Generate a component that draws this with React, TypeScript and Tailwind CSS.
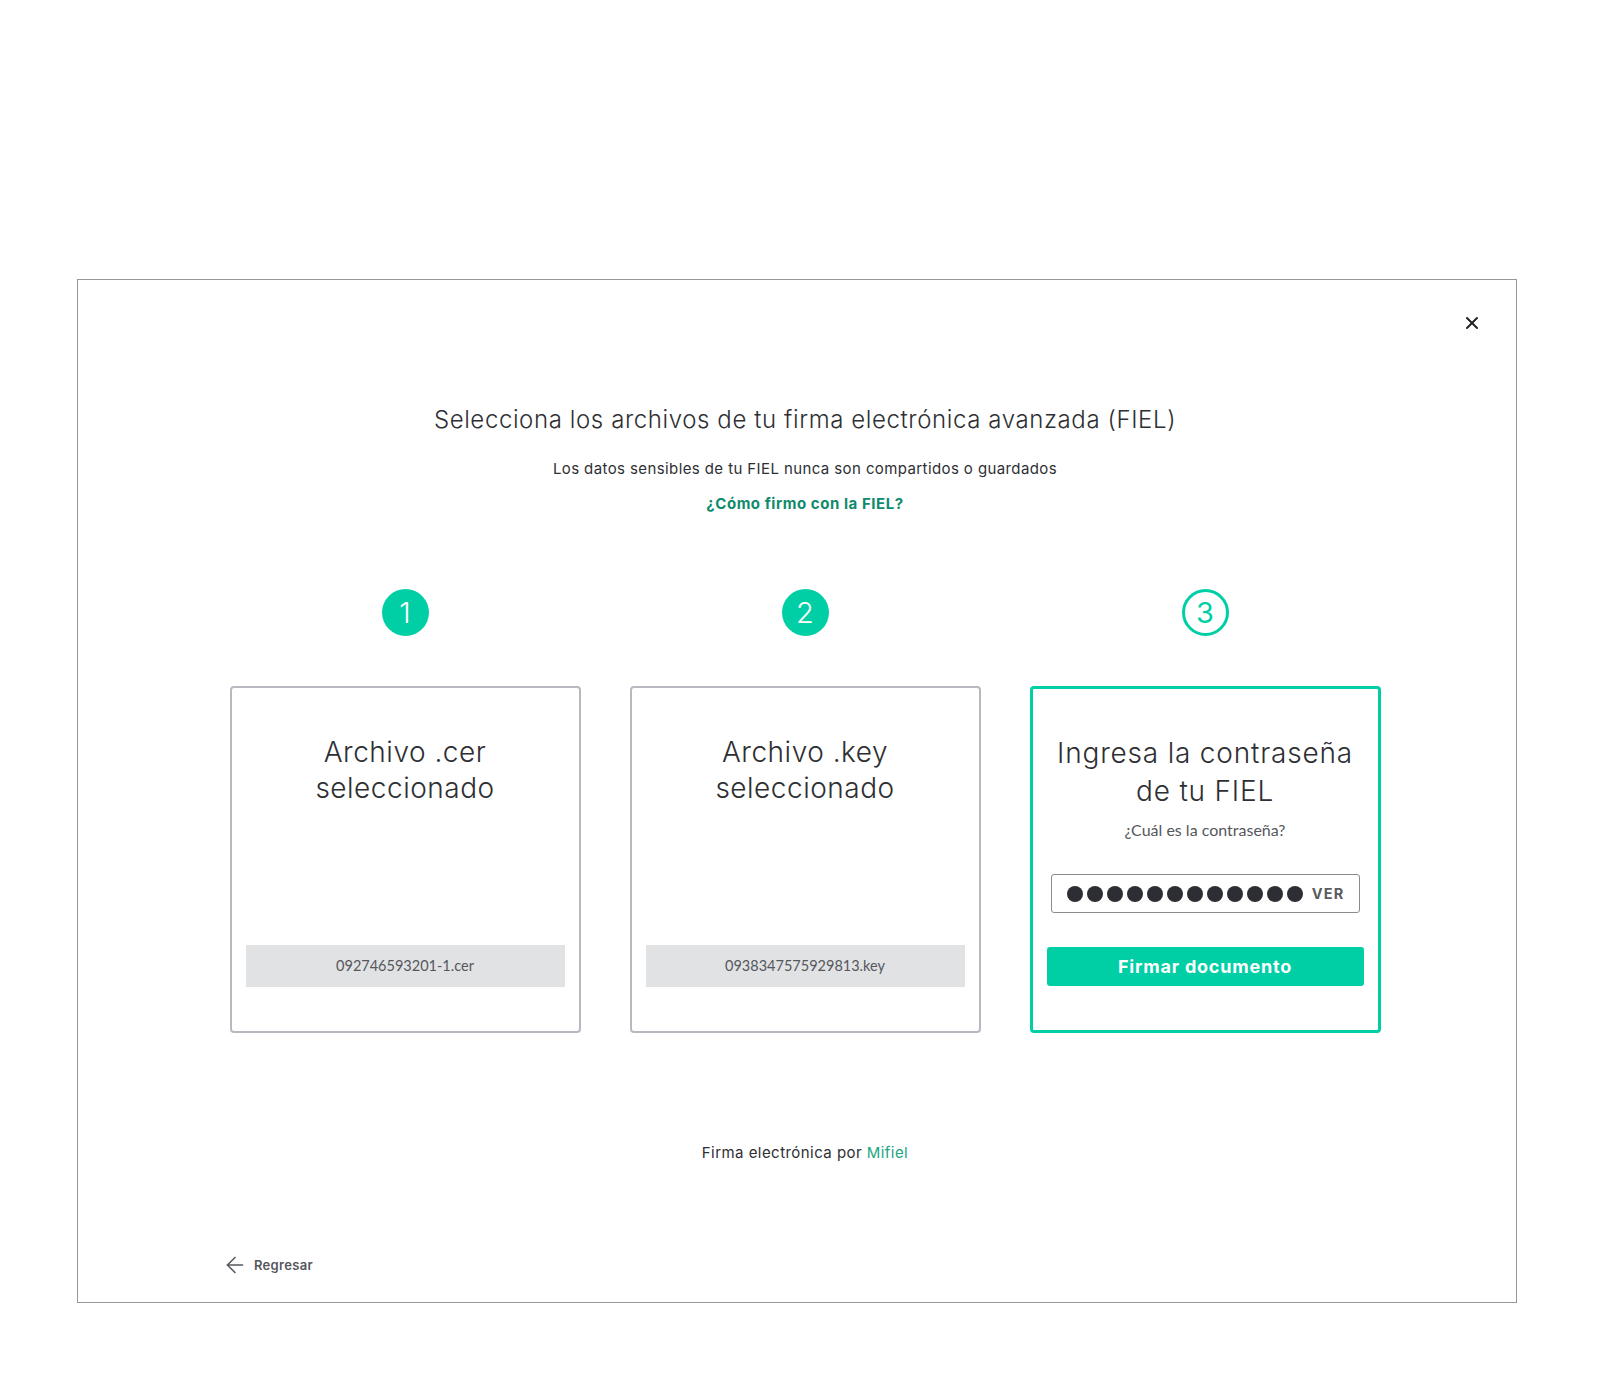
import { X, ArrowLeft } from 'lucide-react';

const FILES = [
  { step: '1', title: ['Archivo .cer', 'seleccionado'], file: '092746593201-1.cer' },
  { step: '2', title: ['Archivo .key', 'seleccionado'], file: '0938347575929813.key' },
];

function StepCircle({ n, outlined }: { n: string; outlined?: boolean }) {
  return (
    <div
      className={
        outlined
          ? 'flex h-[47px] w-[47px] items-center justify-center rounded-full border-[3px] border-[#00cfa6] text-[29px] font-normal text-[#00cfa6]'
          : 'flex h-[47px] w-[47px] items-center justify-center rounded-full bg-[#00cfa6] text-[29px] font-light text-white'
      }
    >
      {n}
    </div>
  );
}

function FileCard({ title, file }: { title: string[]; file: string }) {
  return (
    <div className="flex h-[347px] flex-col rounded-[4px] border-2 border-[#b8b9c0] px-[14px] pt-[46px] pb-[44px]">
      <div className="text-center text-[28px] leading-[36px] font-light tracking-[0.5px] text-[#2e2f33]">
        {title[0]}
        <br />
        {title[1]}
      </div>
      <div className="mt-auto flex h-[42px] items-center justify-center bg-[#e1e2e4] font-['Lato',sans-serif] text-[14.5px] text-[#55575c]">
        {file}
      </div>
    </div>
  );
}

function PasswordCard() {
  return (
    <div className="flex h-[347px] flex-col rounded-[4px] border-[3px] border-[#00cfa6] px-[14px] pt-[45px]">
      <div className="text-center text-[28px] leading-[38px] font-light tracking-[0.8px] text-[#2e2f33]">
        Ingresa la contraseña
        <br />
        de tu FIEL
      </div>
      <div className="mt-[10px] text-center font-['Lato',sans-serif] text-[16px] leading-[20px] text-[#55575c]">
        ¿Cuál es la contraseña?
      </div>
      <div className="mx-[4px] mt-[34px] flex h-[39px] items-center justify-between rounded-[3px] border border-[#8a8b8f] pr-[14px] pl-[15px]">
        <div className="flex gap-[4px]">
          {Array.from({ length: 12 }).map((_, i) => (
            <span key={i} className="h-[16px] w-[16px] rounded-full bg-[#2d2e33]" />
          ))}
        </div>
        <span className="text-[14.5px] font-bold tracking-[1.2px] text-[#5b5c61]">VER</span>
      </div>
      <button className="mt-[34px] flex h-[39px] items-center justify-center rounded-[3px] bg-[#00cfa6] text-[18px] font-bold tracking-[0.8px] text-white">
        Firmar documento
      </button>
    </div>
  );
}

export default function App() {
  return (
    <div className="h-[1379px] w-[1609px] bg-white pt-[279px] pl-[77px] font-['Inter',sans-serif]">
      <div className="relative h-[1024px] w-[1440px] border border-[#979797]">
        {/* Close */}
        <button className="absolute top-[33px] right-[34px] text-[#222]">
          <X className="h-[20px] w-[20px]" strokeWidth={2.4} />
        </button>

        <div className="flex flex-col items-center pt-[124px] pl-[16px]">
          <h1 className="text-[24px] leading-[32px] font-light tracking-[0.6px] text-[#2e2f33]">
            Selecciona los archivos de tu firma electrónica avanzada (FIEL)
          </h1>
          <p className="mt-[23px] text-[15px] leading-[20px] tracking-[0.4px] text-[#2e2f33]">
            Los datos sensibles de tu FIEL nunca son compartidos o guardados
          </p>
          <a className="mt-[15px] text-[15px] leading-[20px] font-bold tracking-[0.55px] text-[#0f8a6c]">
            ¿Cómo firmo con la FIEL?
          </a>

          <div className="mt-[75px] grid grid-cols-[351px_351px_351px] gap-x-[49px]">
            {FILES.map((f) => (
              <div key={f.step} className="flex justify-center">
                <StepCircle n={f.step} />
              </div>
            ))}
            <div className="flex justify-center">
              <StepCircle n="3" outlined />
            </div>

            {FILES.map((f) => (
              <div key={f.step} className="mt-[50px]">
                <FileCard title={f.title} file={f.file} />
              </div>
            ))}
            <div className="mt-[50px]">
              <PasswordCard />
            </div>
          </div>

          <p className="mt-[110px] text-[15px] leading-[20px] tracking-[0.45px] text-[#2e2f33]">
            Firma electrónica por <span className="text-[#1aa67f]">Mifiel</span>
          </p>
        </div>

        <div className="mt-[89px] ml-[144px] flex items-center gap-[6px] text-[#55575c]">
          <ArrowLeft className="h-[26px] w-[26px]" strokeWidth={1.4} />
          <span className="text-[13px] leading-[20px] font-semibold tracking-[0.3px]">Regresar</span>
        </div>
      </div>
    </div>
  );
}
